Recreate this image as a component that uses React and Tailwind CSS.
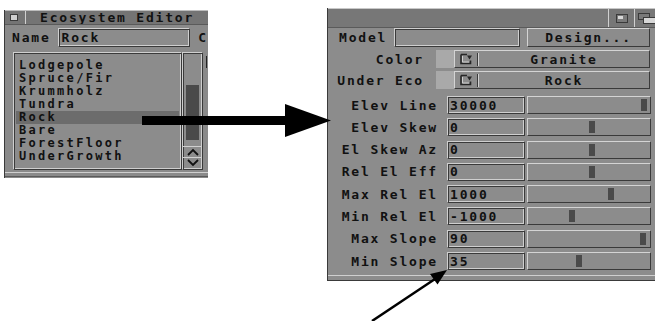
import React from 'react';

// estilos comuns (bevel estilo Amiga)
const font = "font-['DejaVu_Sans_Mono',monospace] font-bold text-[13px] tracking-[1.8px] text-[#111]";
const listFont = "font-['DejaVu_Sans_Mono',monospace] font-bold text-[12px] tracking-[2.3px] text-[#111]";
const ridge = "border border-t-[#cfcfcf] border-l-[#cfcfcf] border-b-[#3a3a3a] border-r-[#3a3a3a] shadow-[inset_1px_1px_0_#3a3a3a,inset_-1px_-1px_0_#cfcfcf]";
const raised = "border border-t-[#d4d4d4] border-l-[#d4d4d4] border-b-[#3a3a3a] border-r-[#3a3a3a]";

const ecosystems = ['Lodgepole', 'Spruce/Fir', 'Krummholz', 'Tundra', 'Rock', 'Bare', 'ForestFloor', 'UnderGrowth'];

const params = [
  { label: 'Elev Line', value: '30000', knob: 113 },
  { label: 'Elev Skew', value: '0', knob: 61 },
  { label: 'El Skew Az', value: '0', knob: 61 },
  { label: 'Rel El Eff', value: '0', knob: 61 },
  { label: 'Max Rel El', value: '1000', knob: 80 },
  { label: 'Min Rel El', value: '-1000', knob: 41 },
  { label: 'Max Slope', value: '90', knob: 112 },
  { label: 'Min Slope', value: '35', knob: 48 },
];

function CycleIcon() {
  return (
    <svg width="14" height="12" viewBox="0 0 14 12">
      <path d="M2 1.5H8M2 1.5V10.5H11.5V7.5" fill="none" stroke="#262626" strokeWidth="1.6" />
      <path d="M3.5 3V9H10" fill="none" stroke="#cfcfcf" strokeWidth="1" />
      <polygon points="8,2.5 13,2.5 10.5,6.5" fill="#262626" />
    </svg>
  );
}

function CycleRow({ label, value }) {
  return (
    <div className="flex items-center h-[18px]">
      <div className={`${font} w-[90px] text-right leading-none`}>{label}</div>
      <div className="ml-[12px] w-[18px] h-[18px] bg-[#a9a9a9]" />
      <div className={`${raised} w-[196px] h-[18px] flex items-center bg-[#8c8c8c]`}>
        <div className="w-[22px] flex justify-center"><CycleIcon /></div>
        <div className="w-px h-[13px] bg-[#3a3a3a]" />
        <div className="w-px h-[13px] bg-[#d0d0d0]" />
        <div className={`${font} flex-1 text-center leading-none`}>{value}</div>
      </div>
    </div>
  );
}

function ParamRow({ label, value, knob }) {
  return (
    <div className="flex items-center h-[18px]">
      <div className={`${font} w-[104px] text-right leading-none tracking-[1.6px]`}>{label}</div>
      <div className={`${ridge} ml-[9px] w-[78px] h-[18px] flex items-center pl-[2px] bg-[#8c8c8c]`}>
        <span className={`${font} leading-none tracking-[0.6px]`}>{value}</span>
      </div>
      <div className={`${raised} ml-[2px] w-[124px] h-[18px] flex items-center bg-[#8c8c8c]`}>
        <div className="w-[6px] h-[12px] bg-[#4a4a4a]" style={{ marginLeft: knob }} />
      </div>
    </div>
  );
}

function LeftWindow() {
  return (
    <div className="absolute left-[4px] top-[10px] w-[204px] h-[168px] bg-[#8a8a8a] border-l border-[#3a3a3a] flex flex-col overflow-hidden">
      {/* barra de título */}
      <div className="h-[14px] bg-[#747474] border-t border-[#bdbdbd] flex items-center">
        <div className="ml-[5px] w-[8px] h-[7px] bg-[#cfcfcf] border border-[#3a3a3a]" />
        <div className="ml-[7px] w-px h-[13px] bg-[#d0d0d0]" />
        <div className={`${font} ml-[14px] leading-none`}>Ecosystem Editor</div>
      </div>
      <div className="h-px bg-[#5a5a5a]" />
      {/* nome */}
      <div className="flex items-center mt-[3px] h-[19px]">
        <div className={`${font} ml-[7px] leading-none tracking-[1.2px]`}>Name</div>
        <div className={`${ridge} ml-[7px] w-[137px] h-[19px] flex items-center pl-[3px] bg-[#8c8c8c]`}>
          <span className={`${font} leading-none`}>Rock</span>
        </div>
        <div className={`${font} ml-[8px] leading-none`}>C</div>
      </div>
      {/* lista */}
      <div className="flex mt-[5px] ml-[8px]">
        <div className={`${ridge} w-[169px] h-[118px] pt-[6px] px-[2px] bg-[#8c8c8c]`}>
          {ecosystems.map(name => (
            <div
              key={name}
              className={`${listFont} h-[13px] leading-[13px] pl-[3px] ${name === 'Rock' ? 'bg-[#6c6c6c]' : ''}`}
            >
              {name}
            </div>
          ))}
        </div>
        <div className={`${ridge} w-[21px] h-[118px] flex flex-col bg-[#8c8c8c]`}>
          <div className="flex-1 pt-[32px] px-[3px]">
            <div className="h-[55px] bg-[#4a4a4a]" />
          </div>
          <div className="h-[11px] border-t border-[#d0d0d0] flex items-center justify-center">
            <svg width="12" height="8" viewBox="0 0 12 8"><path d="M1 7L6 2L11 7" fill="none" stroke="#111" strokeWidth="1.8" /></svg>
          </div>
          <div className="h-[11px] border-t border-[#d0d0d0] flex items-center justify-center mb-[1px]">
            <svg width="12" height="8" viewBox="0 0 12 8"><path d="M1 1L6 6L11 1" fill="none" stroke="#111" strokeWidth="1.8" /></svg>
          </div>
        </div>
        <div className="ml-[3px] mt-[4px] w-px h-[12px] bg-[#222]" />
      </div>
      <div className="mt-[2px] h-px bg-[#cfcfcf]" />
      <div className="mt-[3px] h-px bg-[#5a5a5a]" />
    </div>
  );
}

function RightWindow() {
  return (
    <div className="absolute left-[327px] top-[8px] w-[328px] h-[273px] bg-[#8c8c8c] border-l border-[#3a3a3a] flex flex-col">
      {/* barra de título */}
      <div className="h-[20px] bg-[#777777] border-t border-[#c8c8c8] border-b border-b-[#5a5a5a] flex items-stretch justify-end">
        <div className="w-px bg-[#d0d0d0]" />
        <div className="w-[25px] flex items-center justify-center">
          <div className="w-[12px] h-[9px] border border-[#3a3a3a] bg-[#7a7a7a] relative">
            <div className="absolute left-[1px] top-[1px] w-[5px] h-[3px] bg-[#d8d8d8]" />
          </div>
        </div>
        <div className="w-px bg-[#d0d0d0]" />
        <div className="w-[20px] flex items-center pl-[3px] overflow-hidden">
          <div className="relative w-[18px] h-[11px]">
            <div className="absolute left-0 top-0 w-[12px] h-[7px] border border-[#3a3a3a] bg-[#7a7a7a]" />
            <div className="absolute left-[5px] top-[4px] w-[14px] h-[7px] border border-[#3a3a3a] bg-[#d8d8d8]" />
          </div>
        </div>
      </div>
      <div className="flex flex-col pl-[6px]">
        {/* modelo */}
        <div className="flex items-center h-[19px]">
          <div className={`${font} ml-[5px] w-[55px] leading-none tracking-[1.6px]`}>Model</div>
          <div className={`${ridge} w-[126px] h-[19px] bg-[#8c8c8c]`} />
          <div className={`${raised} ml-[7px] w-[123px] h-[19px] flex items-center justify-center bg-[#8c8c8c]`}>
            <span className={`${font} leading-none`}>Design...</span>
          </div>
        </div>
        <div className="mt-[3px]"><CycleRow label="Color" value="Granite" /></div>
        <div className="mt-[3px]"><CycleRow label="Under Eco" value="Rock" /></div>
        <div className="mt-[7px] flex flex-col gap-[4.3px]">
          {params.map(p => <ParamRow key={p.label} {...p} />)}
        </div>
      </div>
      <div className="mt-[5px] h-px bg-[#cfcfcf]" />
      <div className="flex-1" />
      <div className="h-px bg-[#3a3a3a]" />
    </div>
  );
}

export default function App() {
  return (
    <div className="relative w-[655px] h-[321px] bg-white overflow-hidden">
      <LeftWindow />
      <RightWindow />
      {/* setas */}
      <svg className="absolute inset-0 pointer-events-none" width="655" height="321" viewBox="0 0 655 321">
        <rect x="142" y="116" width="145" height="9" fill="#000" />
        <polygon points="285,104 331,120.5 285,137" fill="#000" />
        <line x1="372" y1="321" x2="438" y2="277" stroke="#000" strokeWidth="2.5" />
        <polygon points="447,270 437.5,284.5 430,274" fill="#000" />
      </svg>
    </div>
  );
}
